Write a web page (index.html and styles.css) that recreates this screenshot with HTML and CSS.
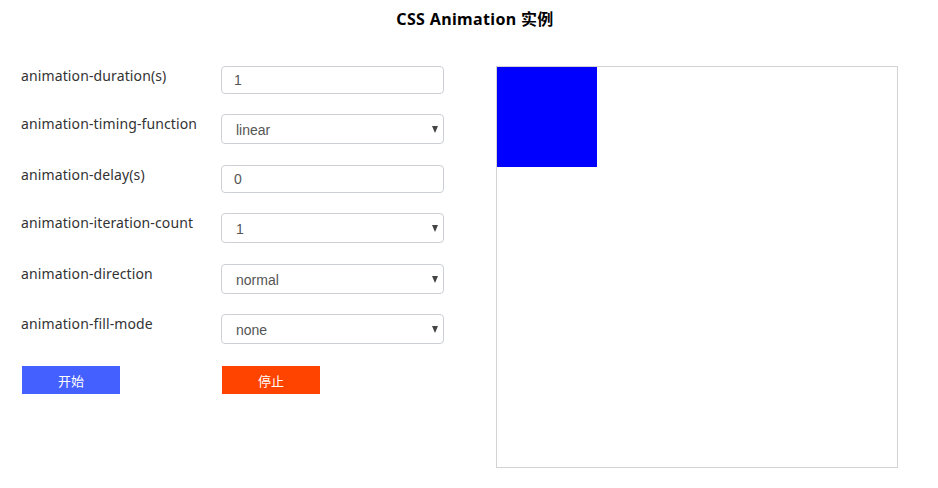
FILE: index.html
```html
<!DOCTYPE html>
<html>
<head>
<meta charset="utf-8">
<title>CSS Animation 实例</title>
<link rel="stylesheet" href="styles.css">
</head>
<body>
<h1 class="title">CSS Animation 实例</h1>
<div class="main">
  <div class="form">
    <div class="row row-input">
      <label class="label">animation-duration(s)</label>
      <input class="field" type="text" value="1">
    </div>
    <div class="row row-select">
      <label class="label">animation-timing-function</label>
      <div class="select-wrap"><select class="field select"><option>linear</option></select></div>
    </div>
    <div class="row row-input">
      <label class="label">animation-delay(s)</label>
      <input class="field" type="text" value="0">
    </div>
    <div class="row row-select">
      <label class="label">animation-iteration-count</label>
      <div class="select-wrap"><select class="field select"><option>1</option></select></div>
    </div>
    <div class="row row-select row-tight">
      <label class="label">animation-direction</label>
      <div class="select-wrap"><select class="field select"><option>normal</option></select></div>
    </div>
    <div class="row row-select row-last">
      <label class="label">animation-fill-mode</label>
      <div class="select-wrap"><select class="field select"><option>none</option></select></div>
    </div>
    <div class="buttons">
      <button class="btn btn-start">开始</button>
      <button class="btn btn-stop">停止</button>
    </div>
  </div>
  <div class="stage">
    <div class="box"></div>
  </div>
</div>
</body>
</html>
```
FILE: styles.css
```css
html, body {
  margin: 0;
  padding: 0;
  background: #fff;
}
body {
  font-family: "Noto Sans", "Noto Sans CJK SC", sans-serif;
  color: #333;
  font-size: 14px;
}
.title {
  margin: 0;
  padding: 9px 0 0 12px;
  height: 27px;
  line-height: 20px;
  font-size: 16px;
  font-weight: bold;
  text-align: center;
  color: #000;
  letter-spacing: 0.35px;
}
.main {
  display: flex;
  align-items: flex-start;
  padding-left: 21px;
  margin-top: 30px;
}
.form {
  width: 423px;
  display: flex;
  flex-direction: column;
}
.row {
  display: flex;
  align-items: flex-start;
}
.row-input {
  height: 28px;
  margin-bottom: 20px;
}
.row-select {
  height: 30px;
  margin-bottom: 21px;
}
.row-tight {
  margin-bottom: 20px;
}
.row-last {
  margin-bottom: 22px;
}
.label {
  width: 200px;
  line-height: 20px;
  font-size: 14px;
  color: #333;
  letter-spacing: 0.12px;
}
.field {
  box-sizing: border-box;
  width: 223px;
  height: 28px;
  margin: 0;
  border: 1px solid #ccd0d6;
  border-radius: 4px;
  padding: 0 12px;
  font-family: "Liberation Sans", Arial, sans-serif;
  font-size: 14px;
  color: #555;
  background: #fff;
  outline: none;
}
.select-wrap {
  position: relative;
  width: 223px;
  height: 30px;
}
.select {
  height: 30px;
  padding: 2px 14px 0 14px;
  -webkit-appearance: none;
  appearance: none;
}
.select-wrap::after {
  content: "";
  position: absolute;
  right: 6px;
  top: 12px;
  border-left: 3.5px solid transparent;
  border-right: 3.5px solid transparent;
  border-top: 7px solid #444;
  pointer-events: none;
}
.buttons {
  display: flex;
  gap: 102px;
  padding-left: 1px;
}
.btn {
  width: 98px;
  height: 28px;
  border: none;
  border-radius: 0;
  padding: 0;
  color: #fff;
  font-family: "Noto Sans CJK SC", sans-serif;
  font-size: 13px;
}
.btn-start {
  background: #4460ff;
}
.btn-stop {
  background: #ff4400;
}
.stage {
  width: 400px;
  height: 400px;
  border: 1px solid #d3d3d3;
  margin-left: 52px;
}
.box {
  width: 100px;
  height: 100px;
  background: #0000ff;
}
```
